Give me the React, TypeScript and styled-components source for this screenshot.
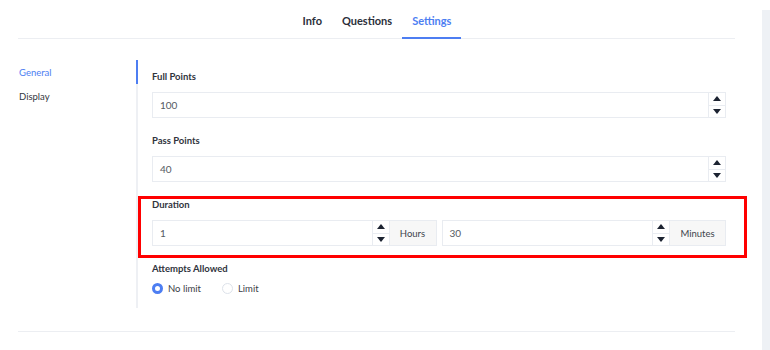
import styled, { createGlobalStyle } from 'styled-components';

const GlobalStyle = createGlobalStyle`
  body {
    margin: 0;
    background: #ffffff;
    font-family: Lato, "Open Sans", "Liberation Sans", sans-serif;
    color: #2f333d;
  }
`;

const Page = styled.div`
  display: flex;
  width: 770px;
  height: 350px;
  overflow: hidden;
`;

const Main = styled.div`
  width: 717px;
  padding: 0 27px 0 18px;
`;

const ScrollTrack = styled.div`
  width: 8px;
  margin-top: 10px;
  background-color: #eef1f5;
`;

const Header = styled.div`
  display: flex;
  justify-content: center;
  height: 38px;
  border-bottom: 1px solid #eceef2;
  padding-left: 1px;
`;

const Tab = styled.div<{ active?: boolean }>`
  display: flex;
  align-items: center;
  padding: 4px 10px 0;
  font-size: 11px;
  font-weight: bold;
  color: ${(props) => (props.active ? '#4d7ef2' : '#2b2f3a')};
  border-bottom: 2px solid ${(props) => (props.active ? '#4d7ef2' : 'transparent')};
  margin-bottom: -1px;
`;

const Body = styled.div`
  display: flex;
  margin-top: 21px;
`;

const Sidebar = styled.div`
  width: 118px;
  display: flex;
  flex-direction: column;
`;

const SideItem = styled.div<{ active?: boolean }>`
  height: 24px;
  display: flex;
  align-items: center;
  padding-left: 1px;
  font-size: 9.5px;
  color: ${(props) => (props.active ? '#4d7ef2' : '#333740')};
`;

const Content = styled.div`
  position: relative;
  flex: 1;
  border-left: 2px solid #eef0f4;
  padding: 10px 9px 11px 14px;
  display: flex;
  flex-direction: column;
  gap: 16px;

  &::before {
    content: '';
    position: absolute;
    left: -2px;
    top: 0;
    width: 2px;
    height: 24px;
    background-color: #4d7ef2;
  }
`;

const Field = styled.div<{ highlight?: boolean }>`
  position: relative;
  display: flex;
  flex-direction: column;
  gap: 8px;

  ${(props) => props.highlight && `
    &::after {
      content: '';
      position: absolute;
      left: -14px;
      right: -21px;
      top: -2px;
      bottom: -12px;
      border: 3px solid #ff0000;
      pointer-events: none;
    }
  `}
`;

const Label = styled.div`
  font-size: 9.5px;
  line-height: 14px;
  font-weight: bold;
  color: #30343d;
`;

const InputRow = styled.div`
  display: flex;
  gap: 5px;
`;

const Group = styled.div`
  flex: 1;
  display: flex;
`;

const NumberBox = styled.div`
  flex: 1 1 auto;
  display: flex;
  height: 26px;
  min-height: 26px;
  box-sizing: border-box;
  border: 1px solid #e9ecf1;
`;

const Value = styled.div`
  flex: 1;
  display: flex;
  align-items: center;
  padding-left: 7px;
  font-size: 10px;
  color: #555a63;
`;

const Spinner = styled.div`
  width: 16px;
  display: flex;
  flex-direction: column;
  border-left: 1px solid #e9ecf1;
`;

const SpinButton = styled.div<{ down?: boolean }>`
  flex: 1;
  display: flex;
  align-items: center;
  justify-content: center;
  border-top: ${(props) => (props.down ? '1px solid #e9ecf1' : 'none')};

  &::before {
    content: '';
    width: 0;
    height: 0;
    border-left: 4px solid transparent;
    border-right: 4px solid transparent;
    ${(props) => (props.down
    ? 'border-top: 5px solid #1c2331;'
    : 'border-bottom: 5px solid #1c2331;')}
  }
`;

const Addon = styled.div<{ width: number }>`
  width: ${(props) => props.width}px;
  height: 26px;
  box-sizing: border-box;
  display: flex;
  align-items: center;
  justify-content: center;
  background-color: #f7f7f7;
  border: 1px solid #e9ecf1;
  border-left: none;
  font-size: 9.5px;
  color: #40444c;
`;

const RadioRow = styled.div`
  display: flex;
  align-items: center;
  gap: 21px;
  height: 18px;
  margin-top: -5px;
`;

const RadioOption = styled.div`
  display: flex;
  align-items: center;
  gap: 5px;
  font-size: 9.5px;
  color: #3a3e46;
`;

const RadioDot = styled.div<{ checked?: boolean }>`
  width: 11px;
  height: 11px;
  box-sizing: border-box;
  border-radius: 50%;
  background-color: #ffffff;
  border: ${(props) => (props.checked ? '3.5px solid #4d7ef2' : '1px solid #dde2ea')};
`;

const Footer = styled.div`
  margin-top: 23px;
  border-top: 1px solid #eceef2;
`;

function NumberInput({ value }: { value: string }) {
  return (
    <NumberBox>
      <Value>{value}</Value>
      <Spinner>
        <SpinButton />
        <SpinButton down />
      </Spinner>
    </NumberBox>
  );
}

export default function App() {
  return (
    <>
      <GlobalStyle />
      <Page>
        <Main>
          <Header>
            <Tab>Info</Tab>
            <Tab>Questions</Tab>
            <Tab active>Settings</Tab>
          </Header>
          <Body>
            <Sidebar>
              <SideItem active>General</SideItem>
              <SideItem>Display</SideItem>
            </Sidebar>
            <Content>
              <Field>
                <Label>Full Points</Label>
                <NumberInput value="100" />
              </Field>
              <Field>
                <Label>Pass Points</Label>
                <NumberInput value="40" />
              </Field>
              <Field highlight>
                <Label>Duration</Label>
                <InputRow>
                  <Group>
                    <NumberInput value="1" />
                    <Addon width={47}>Hours</Addon>
                  </Group>
                  <Group>
                    <NumberInput value="30" />
                    <Addon width={56}>Minutes</Addon>
                  </Group>
                </InputRow>
              </Field>
              <Field>
                <Label>Attempts Allowed</Label>
                <RadioRow>
                  <RadioOption>
                    <RadioDot checked />
                    No limit
                  </RadioOption>
                  <RadioOption>
                    <RadioDot />
                    Limit
                  </RadioOption>
                </RadioRow>
              </Field>
            </Content>
          </Body>
          <Footer />
        </Main>
        <ScrollTrack />
      </Page>
    </>
  );
}
